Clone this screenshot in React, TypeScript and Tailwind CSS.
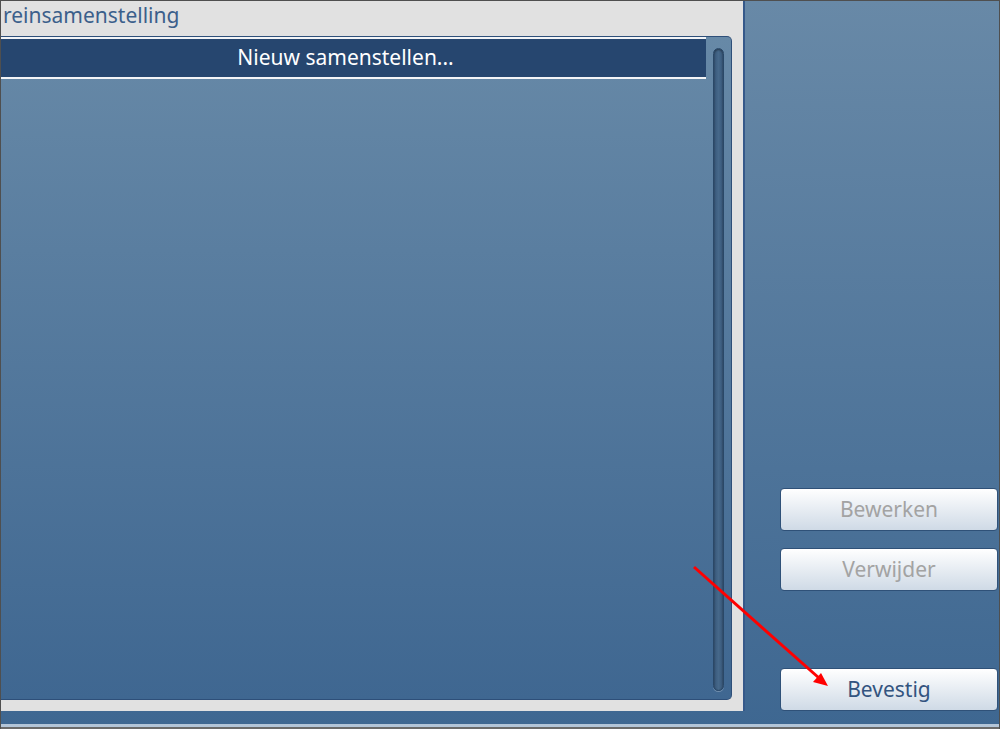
import React from "react";

const font = { fontFamily: '"Noto Sans", "Open Sans", sans-serif' };

function ActionButton({ label, disabled }: { label: string; disabled?: boolean }) {
  return (
    <button
      className={`h-[43px] w-[218px] rounded-[4px] border border-[#2f5178] bg-gradient-to-b from-[#ffffff] to-[#cfdae6] text-[21px] shadow-[inset_0_1px_0_#ffffff] ${
        disabled ? "text-[#a3a3a3]" : "text-[#33547f]"
      }`}
    >
      {label}
    </button>
  );
}

export default function App() {
  return (
    <div
      className="relative h-[729px] w-[1000px] overflow-hidden border-x border-t border-[#4f4f4f] bg-gradient-to-b from-[#6889a7] to-[#3e6791]"
      style={font}
    >
      <div className="flex h-[710px]">
        {/* left panel */}
        <div className="flex h-[710px] w-[744px] flex-col border-r-2 border-[#36598a] bg-[#e1e1e1] pr-[11px] pb-[11px]">
          <div className="h-[35px] pl-[2px] pt-[4px] text-[21px] leading-none text-[#3b5f8b]">
            reinsamenstelling
          </div>
          <div className="flex flex-1 rounded-tr-[5px] rounded-br-[5px] border-y border-r border-[#2e4f79] bg-gradient-to-b from-[#6789a7] to-[#3f6791]">
            <div className="flex-1">
              <div className="flex h-[42px] items-center justify-center border-y-2 border-[#f2f4f7] bg-[#26466f] pr-[16px] text-[21px] text-white">
                Nieuw samenstellen...
              </div>
            </div>
            <div className="flex w-[25px] justify-center pt-[11px] pb-[8px]">
              <div className="w-[11px] rounded-full border border-[#2a4868] bg-gradient-to-r from-[#38587a] via-[#46688a] to-[#38587a] shadow-[inset_0_1px_2px_rgba(0,0,0,0.45),0_1px_0_rgba(255,255,255,0.25)]" />
            </div>
          </div>
        </div>

        {/* right column */}
        <div className="flex flex-1 flex-col justify-end pl-[35px]">
          <ActionButton label="Bewerken" disabled />
          <div className="mt-[17px]">
            <ActionButton label="Verwijder" disabled />
          </div>
          <div className="mt-[77px]">
            <ActionButton label="Bevestig" />
          </div>
        </div>
      </div>

      <div className="mt-[13px] h-[3px] bg-[#b3c5d8]" />
      <div className="h-[3px] bg-[#6a6a6a]" />

      {/* annotation arrow */}
      <svg className="pointer-events-none absolute left-0 top-0" width="1000" height="729">
        <line x1="693" y1="566" x2="818" y2="677" stroke="#ff0000" strokeWidth="3" />
        <polygon points="827,685 812,681 820,672" fill="#ff0000" />
      </svg>
    </div>
  );
}
